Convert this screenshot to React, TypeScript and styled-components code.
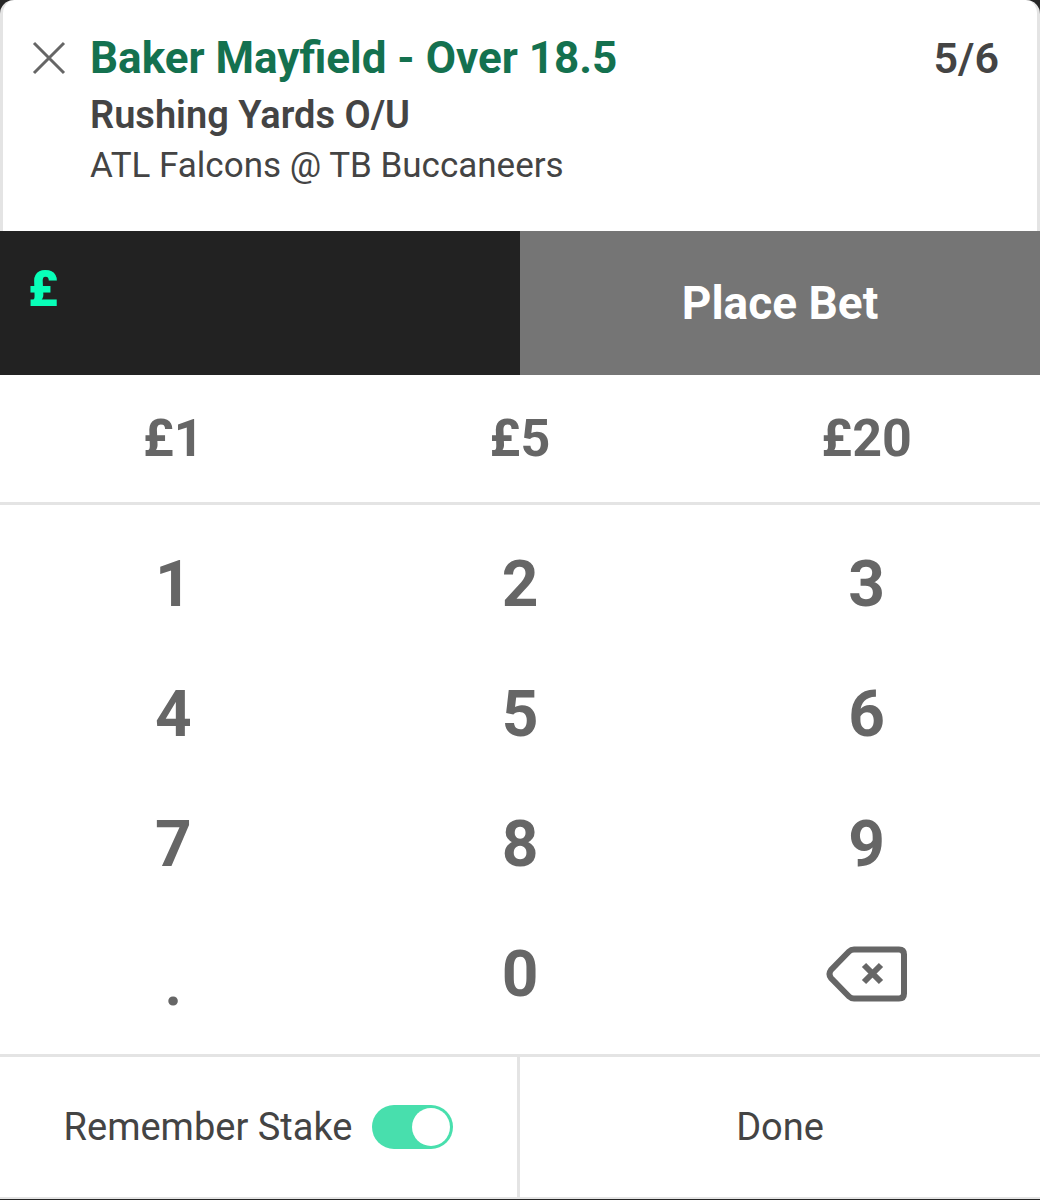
import React, { useState } from "react";
import styled, { createGlobalStyle } from "styled-components";

const GlobalStyle = createGlobalStyle`
  *, *::before, *::after { box-sizing: border-box; }
  body { margin: 0; background: #262626; font-family: Roboto, "Liberation Sans", sans-serif; color: #444; }
  button { margin: 0; padding: 0; border: 0; background: none; font: inherit; color: inherit; cursor: pointer; }
`;

const Slip = styled.main`
  display: flex;
  flex-direction: column;
  padding-bottom: 1px;
`;

const Header = styled.header`
  display: flex;
  align-items: flex-start;
  gap: 24px;
  padding: 31px 38px 44px 29px;
  background: #fff;
  border: solid #e4e4e4;
  border-width: 0 3px;
  border-radius: 14px 14px 0 0;
`;

const CloseButton = styled.button`
  display: flex;
  padding: 9px 0;
  svg { display: block; }
`;

const Selection = styled.div`
  flex: 1;
`;

const Title = styled.h1`
  margin: 0;
  font-size: 44px;
  line-height: 54px;
  font-weight: 700;
  color: #14714f;
`;

const Market = styled.p`
  margin: 0;
  font-size: 38px;
  line-height: 60px;
  font-weight: 600;
`;

const Fixture = styled.p`
  margin: 0;
  font-size: 35px;
  line-height: 42px;
`;

const Odds = styled.div`
  font-size: 43px;
  line-height: 54px;
  font-weight: 600;
`;

const StakeBar = styled.section`
  display: grid;
  grid-template-columns: repeat(2, minmax(0, 1fr));
  height: 144px;
`;

const StakeField = styled.label`
  display: flex;
  padding: 28px;
  background: #222;
  color: #08ffb8;
  font-size: 50px;
  line-height: 60px;
  font-weight: 900;
`;

const StakeInput = styled.input`
  flex: 1;
  min-width: 0;
  height: 60px;
  padding: 0;
  border: 0;
  outline: 0;
  background: transparent;
  color: inherit;
  font: inherit;
`;

const PlaceBet = styled.button`
  && {
    background: #757575;
    color: #fff;
    font-size: 46px;
    font-weight: 700;
  }
`;

const KeyRow = styled.section<{ $keyHeight: number; $top?: number; $bottom?: number }>`
  display: grid;
  grid-template-columns: repeat(3, 1fr);
  grid-auto-rows: ${(p) => p.$keyHeight}px;
  padding: ${(p) => p.$top ?? 0}px 0 ${(p) => p.$bottom ?? 0}px;
  background: #fff;
  border-bottom: 3px solid #e4e4e4;
`;

const Key = styled.button<{ $size: number; $point?: boolean }>`
  && {
    display: flex;
    align-items: center;
    justify-content: center;
    padding-top: ${(p) => (p.$point ? 18 : 0)}px;
    font-size: ${(p) => p.$size}px;
    font-weight: ${(p) => (p.$point ? 600 : 700)};
    color: #666;
  }
`;

const Footer = styled.footer`
  display: grid;
  grid-template-columns: 1fr 1fr;
  height: 142px;
  background: #fff;
  border-bottom: 2px solid #e4e4e4;
  font-size: 38px;
`;

const Remember = styled.label`
  display: flex;
  align-items: center;
  justify-content: center;
  gap: 20px;
  border-right: 3px solid #e4e4e4;
`;

const Toggle = styled.input`
  appearance: none;
  display: flex;
  align-items: center;
  width: 81px;
  height: 44px;
  margin: 0;
  padding: 3px;
  border-radius: 22px;
  background: #b8b8b8;
  &::before {
    content: "";
    width: 38px;
    height: 38px;
    border-radius: 50%;
    background: #fff;
  }
  &:checked {
    justify-content: flex-end;
    background: #48dfad;
  }
`;

const Done = styled.button``;

export default function App() {
  const [stake, setStake] = useState("");
  const [remember, setRemember] = useState(true);
  const keys = ["1", "2", "3", "4", "5", "6", "7", "8", "9", ".", "0"];

  return (
    <>
      <GlobalStyle />
      <Slip>
        <Header>
          <CloseButton aria-label="Remove selection">
            <svg width="34" height="36" viewBox="0 0 34 36" fill="none" stroke="#666" strokeWidth="3">
              <path d="M2 3 32 33M32 3 2 33" />
            </svg>
          </CloseButton>
          <Selection>
            <Title>Baker Mayfield - Over 18.5</Title>
            <Market>Rushing Yards O/U</Market>
            <Fixture>ATL Falcons @ TB Buccaneers</Fixture>
          </Selection>
          <Odds>5/6</Odds>
        </Header>
        <StakeBar>
          <StakeField>
            £
            <StakeInput aria-label="Stake" value={stake} onChange={(e) => setStake(e.target.value)} />
          </StakeField>
          <PlaceBet>Place Bet</PlaceBet>
        </StakeBar>
        <KeyRow $keyHeight={127}>
          {["1", "5", "20"].map((amount) => (
            <Key key={amount} $size={52} onClick={() => setStake(amount)}>
              £{amount}
            </Key>
          ))}
        </KeyRow>
        <KeyRow $keyHeight={130} $top={14} $bottom={15}>
          {keys.map((key) => (
            <Key key={key} $size={64} $point={key === "."} onClick={() => setStake(stake + key)}>
              {key}
            </Key>
          ))}
          <Key $size={64} aria-label="Delete" onClick={() => setStake(stake.slice(0, -1))}>
            <svg width="82" height="56" viewBox="0 0 82 56" fill="none" stroke="#666" strokeWidth="6">
              <path d="M28 3.5H73Q78 3.5 78 8.5V47.5Q78 52.5 73 52.5H28Q25 52.5 23 50.5L5 32Q2 28 5 24L23 5.5Q25 3.5 28 3.5Z" />
              <path d="M38 19 55 36M55 19 38 36" />
            </svg>
          </Key>
        </KeyRow>
        <Footer>
          <Remember>
            Remember Stake
            <Toggle type="checkbox" checked={remember} onChange={(e) => setRemember(e.target.checked)} />
          </Remember>
          <Done>Done</Done>
        </Footer>
      </Slip>
    </>
  );
}
